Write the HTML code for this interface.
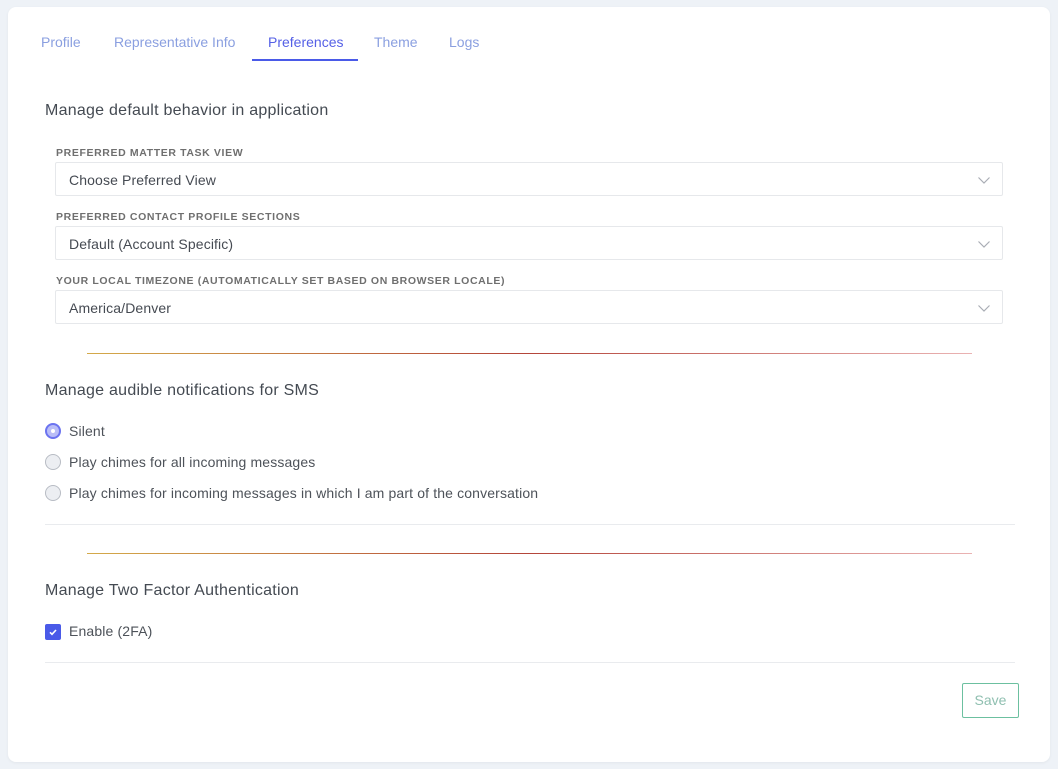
<!DOCTYPE html>
<html><head><style>
*{box-sizing:border-box;margin:0;padding:0}
body{width:1058px;height:769px;background:#eef2f7;font-family:"Liberation Sans",sans-serif;position:relative;overflow:hidden;color:#4a4f57}
.card{position:absolute;left:8px;top:7px;width:1042px;height:755px;background:#fff;border-radius:8px;box-shadow:0 1px 3px rgba(0,0,0,.05)}
.abs{position:absolute;white-space:nowrap}
.tab{position:absolute;top:34px;font-size:14px;color:#8a9fe0}
.h{font-size:16px;color:#444a52;letter-spacing:.25px}
.lbl{font-size:10.5px;font-weight:bold;color:#6f6f6f;letter-spacing:.62px}
.sel{position:absolute;left:55px;width:948px;height:34px;border:1px solid #e6e8eb;border-radius:2px;font-size:14px;letter-spacing:.12px;color:#454a52;padding:9px 0 0 13px}
.sel svg{position:absolute;right:12px;top:14px}
.hr{position:absolute;left:87px;width:885px;height:1px;background:linear-gradient(90deg,#d4aa4a,#b4453a 50%,#eab3b3)}
.thin{position:absolute;left:45px;width:970px;height:1px;background:#e9ebee}
.rad{position:absolute;left:45px;width:16px;height:16px;border-radius:50%;border:1px solid #b8bcc4;background:#eceef2}
.rt{position:absolute;left:69px;font-size:14px;letter-spacing:.14px;color:#4d5259}
</style></head><body>
<div class="card"></div>
<div class="tab" style="left:41px">Profile</div>
<div class="tab" style="left:114px">Representative Info</div>
<div class="tab" style="left:268px;color:#5560e6">Preferences</div>
<div class="abs" style="left:252px;top:59px;width:106px;height:2px;background:#4a5ae8"></div>
<div class="tab" style="left:374px">Theme</div>
<div class="tab" style="left:449px">Logs</div>

<div class="abs h" style="left:45px;top:102px">Manage default behavior in application</div>
<div class="abs lbl" style="left:56px;top:147px">PREFERRED MATTER TASK VIEW</div>
<div class="sel" style="top:162px">Choose Preferred View<svg width="12" height="7" viewBox="0 0 12 7"><path d="M.5.5l5.5 5.5 5.5-5.5" fill="none" stroke="#a9adb5" stroke-width="1.2"/></svg></div>
<div class="abs lbl" style="left:56px;top:211px">PREFERRED CONTACT PROFILE SECTIONS</div>
<div class="sel" style="top:226px">Default (Account Specific)<svg width="12" height="7" viewBox="0 0 12 7"><path d="M.5.5l5.5 5.5 5.5-5.5" fill="none" stroke="#a9adb5" stroke-width="1.2"/></svg></div>
<div class="abs lbl" style="left:56px;top:275px">YOUR LOCAL TIMEZONE (AUTOMATICALLY SET BASED ON BROWSER LOCALE)</div>
<div class="sel" style="top:290px">America/Denver<svg width="12" height="7" viewBox="0 0 12 7"><path d="M.5.5l5.5 5.5 5.5-5.5" fill="none" stroke="#a9adb5" stroke-width="1.2"/></svg></div>

<div class="hr" style="top:353px"></div>
<div class="abs h" style="left:45px;top:382px">Manage audible notifications for SMS</div>
<div class="rad" style="top:423px;border:2px solid #6b73f0;background:#b9bdf7"><div style="position:absolute;left:4px;top:4px;width:4px;height:4px;border-radius:50%;background:#fff"></div></div>
<div class="rt" style="top:423px">Silent</div>
<div class="rad" style="top:454px"></div>
<div class="rt" style="top:454px">Play chimes for all incoming messages</div>
<div class="rad" style="top:485px"></div>
<div class="rt" style="top:485px">Play chimes for incoming messages in which I am part of the conversation</div>
<div class="thin" style="top:524px"></div>

<div class="hr" style="top:553px"></div>
<div class="abs h" style="left:45px;top:582px">Manage Two Factor Authentication</div>
<div class="abs" style="left:45px;top:624px;width:16px;height:16px;border-radius:2px;background:#4a5ae8"><svg width="16" height="16" viewBox="0 0 16 16"><path d="M5 8.3l2 2 4-4.3" fill="none" stroke="#fff" stroke-width="1.6"/></svg></div>
<div class="rt" style="top:623px">Enable (2FA)</div>
<div class="thin" style="top:662px"></div>

<div class="abs" style="left:962px;top:683px;width:57px;height:35px;border:1px solid #6cc0a0;border-radius:2px;font-size:14px;color:#8fbfb0;text-align:center;line-height:33px">Save</div>
</body></html>
